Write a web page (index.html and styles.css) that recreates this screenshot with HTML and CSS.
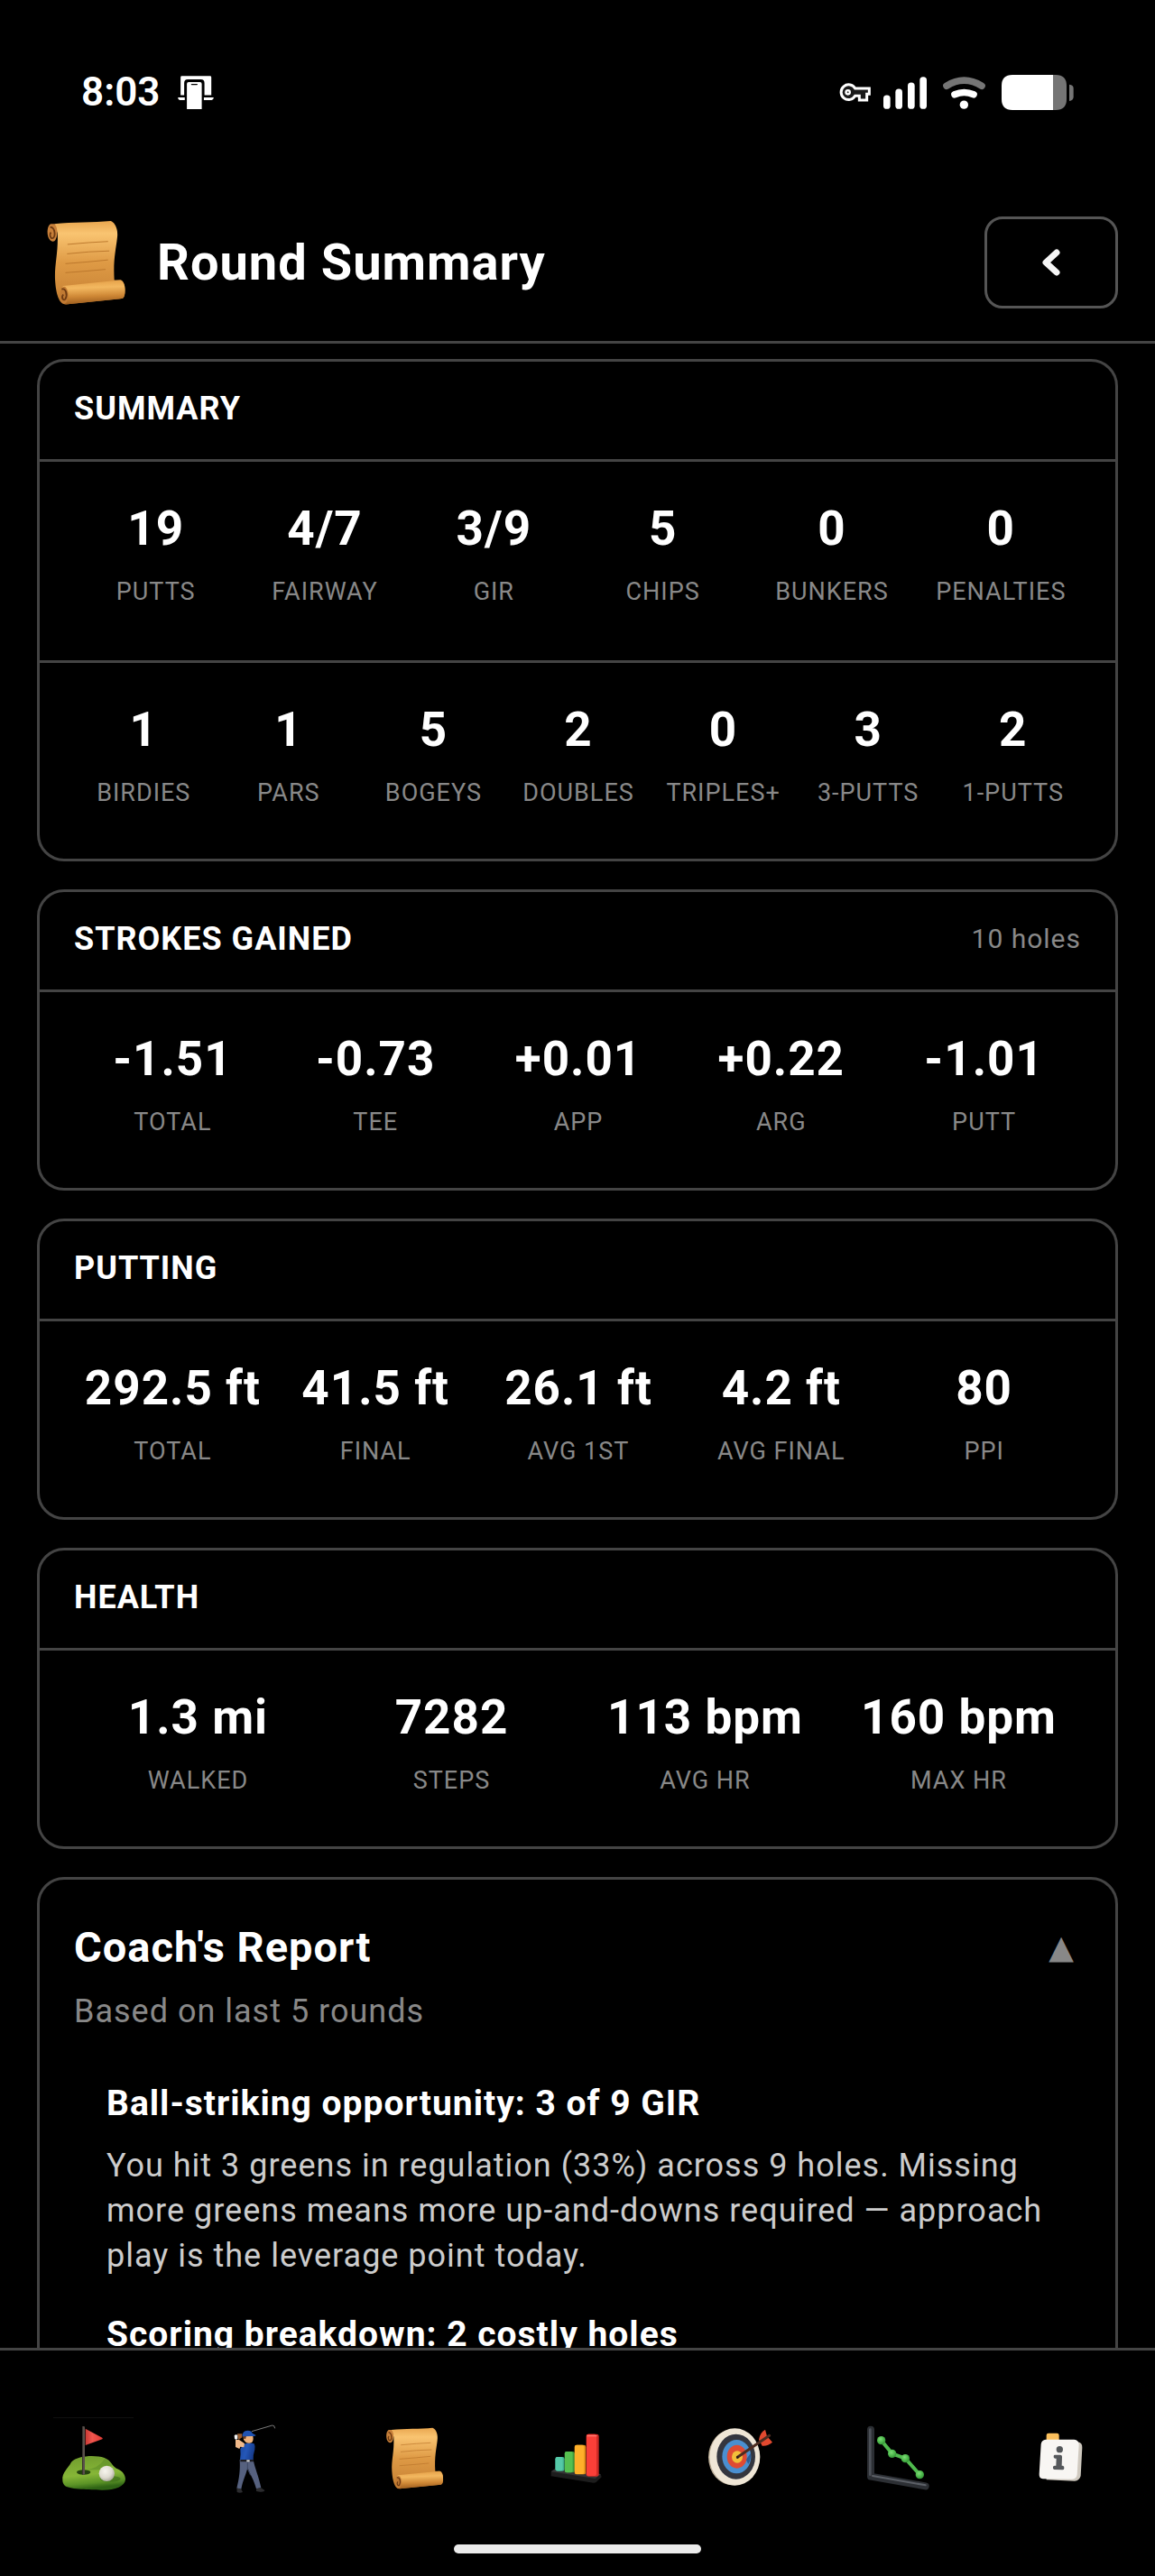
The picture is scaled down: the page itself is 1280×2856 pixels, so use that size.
FILE: index.html
```html
<!DOCTYPE html>
<html lang="en">

<head>
    <meta charset="UTF-8">
    <meta name="viewport" content="width=device-width, initial-scale=1.0">
    <title>Round Summary</title>
    <link rel="stylesheet" href="styles.css">
</head>

<body>
    <!-- Shared gradients and the scroll icon -->
    <svg class="defs" aria-hidden="true">
        <defs>
            <linearGradient id="paper" x1="0" y1="0" x2="0" y2="1">
                <stop offset="0" stop-color="#e9a64f" />
                <stop offset="0.15" stop-color="#f9c471" />
                <stop offset="0.5" stop-color="#de9a45" />
                <stop offset="0.8" stop-color="#cf8a3a" />
                <stop offset="1" stop-color="#b8732a" />
            </linearGradient>
            <linearGradient id="roll" x1="0" y1="0" x2="0.1" y2="1">
                <stop offset="0" stop-color="#e19b43" />
                <stop offset="0.35" stop-color="#f3b860" />
                <stop offset="0.7" stop-color="#cf8836" />
                <stop offset="1" stop-color="#9f5f1f" />
            </linearGradient>
            <linearGradient id="grass" x1="0" y1="0" x2="0.2" y2="1">
                <stop offset="0" stop-color="#6f9a2d" />
                <stop offset="0.6" stop-color="#86b637" />
                <stop offset="0.85" stop-color="#5b9326" />
                <stop offset="1" stop-color="#2f6415" />
            </linearGradient>
            <linearGradient id="flag" x1="0" y1="0" x2="1" y2="0">
                <stop offset="0" stop-color="#c93a35" />
                <stop offset="0.4" stop-color="#f0564e" />
                <stop offset="1" stop-color="#e03a35" />
            </linearGradient>
            <radialGradient id="ball" cx="0.4" cy="0.35" r="0.7">
                <stop offset="0" stop-color="#f7f5ee" />
                <stop offset="0.6" stop-color="#dedbd0" />
                <stop offset="1" stop-color="#a5a396" />
            </radialGradient>
            <linearGradient id="shirt" x1="0" y1="0" x2="1" y2="0.3">
                <stop offset="0" stop-color="#1b479f" />
                <stop offset="0.5" stop-color="#2457b8" />
                <stop offset="1" stop-color="#173c8c" />
            </linearGradient>
            <radialGradient id="dot" cx="0.4" cy="0.35" r="0.7">
                <stop offset="0" stop-color="#7fdb78" />
                <stop offset="0.5" stop-color="#52bd50" />
                <stop offset="1" stop-color="#2f8f33" />
            </radialGradient>
            <symbol id="scroll" viewBox="-39 121 270 270">
                <path d="M14 163 C60 158 110 160 151 156 C163 160 170 178 167 198 C164 226 157 250 160 300 L176 300 C186 304 188 320 184 340 C182 344 176 346 170 346 L42 359 C26 360 18 334 16 300 C14 262 24 236 22 186 Z" fill="url(#paper)" />
                <path d="M6 163 C-6 166 -6 204 10 206 C22 207 26 172 14 163 Z" fill="#c8803a" />
                <path d="M4 172 C14 168 18 190 12 197 C6 202 1 190 6 184" fill="none" stroke="#6d3a12" stroke-width="4" />
                <path d="M36 314 L174 300 C188 302 190 340 180 345 L42 359 C30 352 28 320 36 314 Z" fill="url(#roll)" />
                <ellipse cx="38" cy="337" rx="10" ry="21" fill="#c17a33" />
                <path d="M32 322 C42 318 47 336 41 346 C36 352 30 342 36 335" fill="none" stroke="#6d3a12" stroke-width="4" />
                <path d="M47 213 Q100 208 144 206 M46 236 Q100 230 147 229 M42 260 Q96 256 144 251 M42 282 Q96 278 138 274" fill="none" stroke="#b9742a" stroke-width="2" stroke-linecap="round" />
            </symbol>
        </defs>
    </svg>

    <div class="status-bar">
        <div class="status-left">
            <span class="time">8:03</span>
            <svg class="standby-icon" viewBox="357 50 120 112" aria-hidden="true">
                <path d="M370 51 H465 Q469 51 469 55 V115 H446 V74 Q446 62 434 62 H390 Q378 62 378 74 V115 H366 V55 Q366 51 370 51 Z" fill="#fff" />
                <path d="M357 123 H380 V132 H363 Q357 130 357 123 Z M444 123 H477 Q477 130 470 132 H444 Z" fill="#fff" />
                <path d="M393 71 H431 Q437 71 437 77 V162 H387 V77 Q387 71 393 71 Z" fill="#fff" />
                <rect x="401" y="77" width="22" height="4" rx="2" fill="#000" />
            </svg>
        </div>
        <div class="status-right">
            <svg class="key-icon" viewBox="30 70 105 63" aria-hidden="true">
                <path d="M83 88 H130 V107 H122 V127 H97 V113 H83 A25 25 0 1 1 83 88 Z" fill="#1a1a1a" stroke="#fff" stroke-width="9" />
                <circle cx="59" cy="101" r="10" fill="#fff" />
                <circle cx="59" cy="101" r="3" fill="#333" />
            </svg>
            <svg class="signal-icon" viewBox="177 44 144 107" aria-hidden="true">
                <rect x="177" y="105" width="23" height="46" rx="11" fill="#fff" />
                <rect x="217" y="84" width="23" height="67" rx="11" fill="#fff" />
                <rect x="258" y="63" width="23" height="88" rx="11" fill="#fff" />
                <rect x="298" y="44" width="23" height="107" rx="11" fill="#fff" />
            </svg>
            <svg class="wifi-icon" viewBox="363 44 153 107" aria-hidden="true">
                <path d="M387 74 Q445 38 504 74" fill="none" stroke="#757575" stroke-width="23" stroke-linecap="round" />
                <path d="M414 103 Q445 89 477 103" fill="none" stroke="#fff" stroke-width="23" stroke-linecap="round" />
                <circle cx="445" cy="137" r="14" fill="#fff" />
            </svg>
            <svg class="battery-icon" viewBox="558 39 252 117" aria-hidden="true">
                <path d="M741 39 H750 Q786 39 786 75 V120 Q786 156 750 156 H741 Z" fill="#757575" />
                <path d="M741 39 H606 Q570 39 570 75 V120 Q570 156 606 156 H741 Z" fill="#fff" />
                <path d="M795 71 Q809 72 809 84 V112 Q809 124 795 126 Z" fill="#757575" />
            </svg>
        </div>
    </div>

    <header class="page-header">
        <svg class="header-icon" aria-hidden="true"><use href="#scroll" /></svg>
        <h1>Round Summary</h1>
        <button class="back-button" type="button" aria-label="Back">
            <svg viewBox="0 0 22 30" aria-hidden="true">
                <path d="M17 4 L5 15 L17 26" fill="none" stroke="#f5f5f5" stroke-width="7" stroke-linecap="round" stroke-linejoin="round" />
            </svg>
        </button>
    </header>

    <main class="content">
        <section class="card">
            <div class="card-header">
                <h2>SUMMARY</h2>
            </div>
            <div class="stat-row cols-6">
                <div class="stat"><div class="value">19</div><div class="label">PUTTS</div></div>
                <div class="stat"><div class="value">4/7</div><div class="label">FAIRWAY</div></div>
                <div class="stat"><div class="value">3/9</div><div class="label">GIR</div></div>
                <div class="stat"><div class="value">5</div><div class="label">CHIPS</div></div>
                <div class="stat"><div class="value">0</div><div class="label">BUNKERS</div></div>
                <div class="stat"><div class="value">0</div><div class="label">PENALTIES</div></div>
            </div>
            <div class="stat-row cols-7">
                <div class="stat"><div class="value">1</div><div class="label">BIRDIES</div></div>
                <div class="stat"><div class="value">1</div><div class="label">PARS</div></div>
                <div class="stat"><div class="value">5</div><div class="label">BOGEYS</div></div>
                <div class="stat"><div class="value">2</div><div class="label">DOUBLES</div></div>
                <div class="stat"><div class="value">0</div><div class="label">TRIPLES+</div></div>
                <div class="stat"><div class="value">3</div><div class="label">3-PUTTS</div></div>
                <div class="stat"><div class="value">2</div><div class="label">1-PUTTS</div></div>
            </div>
        </section>

        <section class="card">
            <div class="card-header">
                <h2>STROKES GAINED</h2>
                <span class="note">10 holes</span>
            </div>
            <div class="stat-row cols-5">
                <div class="stat"><div class="value">-1.51</div><div class="label">TOTAL</div></div>
                <div class="stat"><div class="value">-0.73</div><div class="label">TEE</div></div>
                <div class="stat"><div class="value">+0.01</div><div class="label">APP</div></div>
                <div class="stat"><div class="value">+0.22</div><div class="label">ARG</div></div>
                <div class="stat"><div class="value">-1.01</div><div class="label">PUTT</div></div>
            </div>
        </section>

        <section class="card">
            <div class="card-header">
                <h2>PUTTING</h2>
            </div>
            <div class="stat-row cols-5">
                <div class="stat"><div class="value">292.5 ft</div><div class="label">TOTAL</div></div>
                <div class="stat"><div class="value">41.5 ft</div><div class="label">FINAL</div></div>
                <div class="stat"><div class="value">26.1 ft</div><div class="label">AVG 1ST</div></div>
                <div class="stat"><div class="value">4.2 ft</div><div class="label">AVG FINAL</div></div>
                <div class="stat"><div class="value">80</div><div class="label">PPI</div></div>
            </div>
        </section>

        <section class="card">
            <div class="card-header">
                <h2>HEALTH</h2>
            </div>
            <div class="stat-row cols-4">
                <div class="stat"><div class="value">1.3 mi</div><div class="label">WALKED</div></div>
                <div class="stat"><div class="value">7282</div><div class="label">STEPS</div></div>
                <div class="stat"><div class="value">113 bpm</div><div class="label">AVG HR</div></div>
                <div class="stat"><div class="value">160 bpm</div><div class="label">MAX HR</div></div>
            </div>
        </section>

        <section class="card report">
            <div class="report-header">
                <h2>Coach's Report</h2>
                <button class="toggle" type="button" aria-label="Collapse report">▲</button>
            </div>
            <p class="report-note">Based on last 5 rounds</p>
            <div class="report-body">
                <article>
                    <h3>Ball-striking opportunity: 3 of 9 GIR</h3>
                    <p>You hit 3 greens in regulation (33%) across 9 holes. Missing more greens means more up-and-downs required — approach play is the leverage point today.</p>
                </article>
                <article>
                    <h3>Scoring breakdown: 2 costly holes</h3>
                </article>
            </div>
        </section>
    </main>

    <nav class="tab-bar">
        <div class="tabs">
            <a href="#course" aria-label="Course">
                <svg viewBox="180 121 270 270" aria-hidden="true">
                    <path d="M180 122 H447" stroke="#1c1c1c" stroke-width="2" />
                    <path d="M211 330 C208 305 230 290 240 270 C262 248 320 246 350 256 C372 264 376 284 390 291 C410 298 420 312 420 328 C418 352 384 364 340 363 C300 362 240 362 220 350 C214 344 211 338 211 330 Z" fill="url(#grass)" />
                    <path d="M286 296 Q330 292 352 258 Q370 268 376 282 Q350 282 336 296 Z" fill="#5f8f28" opacity="0.6" />
                    <ellipse cx="370" cy="326" rx="34" ry="10" fill="#3e6f1b" opacity="0.7" />
                    <ellipse cx="281" cy="304" rx="23" ry="8" fill="#24420f" />
                    <rect x="276" y="151" width="9" height="161" rx="4" fill="#5a504a" />
                    <rect x="276" y="151" width="3" height="161" rx="1" fill="#3a3330" />
                    <path d="M287 159 L343 189 Q346 192 343 194 L287 214 Z" fill="url(#flag)" />
                    <circle cx="358" cy="308" r="26" fill="url(#ball)" />
                </svg>
            </a>
            <a href="#play" aria-label="Play">
                <svg viewBox="715 121 270 270" aria-hidden="true">
                    <path d="M838 168 L906 148 Q914 147 915 158" fill="none" stroke="#7c7c7c" stroke-width="3" />
                    <path d="M798 262 L843 262 C848 290 862 320 869 356 L853 359 C846 330 832 310 824 288 C820 310 808 330 803 360 L788 357 C796 325 800 300 798 262 Z" fill="#56617f" />
                    <path d="M824 270 L824 292 L834 314" fill="none" stroke="#3e4763" stroke-width="3" />
                    <path d="M788 356 L803 360 L808 370 Q798 374 789 370 Z M853 358 L869 356 L881 364 Q880 370 866 369 L853 367 Z" fill="#2b2b2e" />
                    <path d="M812 210 Q830 204 846 209 Q850 216 848 228 Q842 246 843 263 L799 263 Q802 246 800 226 Z" fill="url(#shirt)" />
                    <rect x="800" y="262" width="44" height="7" rx="2" fill="#1d1d22" />
                    <rect x="821" y="263" width="10" height="6" fill="#d9d9d9" />
                    <path d="M784 196 L796 196 L814 208 L812 221 L800 219 L797 226 L784 220 Z" fill="#f0b98a" />
                    <path d="M810 184 H842 Q845 198 838 205 Q828 210 818 204 L811 196 Z" fill="#efb27c" />
                    <path d="M808 184 H820 L817 194 L812 192 Z" fill="#6b3a1e" />
                    <path d="M790 176 L806 176 L806 188 L794 196 Z" fill="#9a5c2c" />
                    <path d="M780 182 Q784 177 791 180 L791 193 Q785 198 781 192 Z" fill="#f4f4f4" />
                    <path d="M807 185 Q806 166 824 165 Q838 165 840 174 L852 181 Q850 185 838 184 Z" fill="#1f52b0" />
                </svg>
            </a>
            <a href="#rounds" aria-label="Rounds" aria-current="page">
                <svg aria-hidden="true"><use href="#scroll" /></svg>
            </a>
            <a href="#stats" aria-label="Stats">
                <svg viewBox="496 121 270 270" aria-hidden="true">
                    <path d="M543 302 L556 293 L708 310 L711 320 L692 338 L684 339 L543 317 Z" fill="#1d1d1d" />
                    <path d="M543 302 L556 293 L708 310 L690 325 Z" fill="#353535" />
                    <rect x="557" y="253" width="31" height="47" rx="7" fill="#3fae8f" />
                    <rect x="558" y="253" width="24" height="46" rx="6" fill="#55c9a8" />
                    <rect x="588" y="235" width="34" height="70" rx="7" fill="#3b993b" />
                    <rect x="589" y="235" width="26" height="70" rx="6" fill="#56c050" />
                    <rect x="621" y="213" width="38" height="98" rx="7" fill="#e08e17" />
                    <rect x="622" y="213" width="31" height="97" rx="6" fill="#ffb02a" />
                    <rect x="660" y="177" width="42" height="141" rx="7" fill="#cf2a26" />
                    <rect x="661" y="177" width="33" height="139" rx="6" fill="#fb3f38" />
                    <path d="M664 183 H694" stroke="#ff7a70" stroke-width="4" stroke-linecap="round" />
                </svg>
            </a>
            <a href="#practice" aria-label="Practice">
                <svg viewBox="1032 121 270 270" aria-hidden="true">
                    <ellipse cx="1146" cy="254" rx="81" ry="93" fill="#b8aa94" />
                    <ellipse cx="1153" cy="253" rx="84" ry="95" fill="#efe6d6" />
                    <ellipse cx="1157" cy="252" rx="64" ry="75" fill="#34363f" />
                    <ellipse cx="1159" cy="252" rx="48" ry="56" fill="#4a8fd0" />
                    <path d="M1190 262 L1206 240 Q1208 262 1198 276 Z" fill="#2c5d96" />
                    <ellipse cx="1160" cy="252" rx="33" ry="39" fill="#df4a33" />
                    <ellipse cx="1161" cy="253" rx="18" ry="20" fill="#f2bf3a" />
                    <path d="M1233 196 Q1236 172 1254 162 L1260 184 L1278 204 Q1262 218 1244 216 L1238 204 Z" fill="#e2492f" />
                    <path d="M1162 254 L1268 182" stroke="#4d2c20" stroke-width="9" stroke-linecap="round" />
                    <circle cx="1162" cy="254" r="4" fill="#2e1b14" />
                </svg>
            </a>
            <a href="#trends" aria-label="Trends">
                <svg viewBox="309 121 270 270" aria-hidden="true">
                    <path d="M348 162 V318 L530 350" fill="none" stroke="#2c2f34" stroke-width="24" stroke-linecap="round" stroke-linejoin="round" />
                    <path d="M346 162 V312" stroke="#4d5158" stroke-width="8" stroke-linecap="round" />
                    <path d="M354 316 L530 347" stroke="#5c6067" stroke-width="6" stroke-linecap="round" />
                    <path d="M383 198 L419 242 L463 258 L511 312" fill="none" stroke="#50ba4e" stroke-width="12" stroke-linejoin="round" />
                    <circle cx="383" cy="198" r="14" fill="url(#dot)" />
                    <circle cx="419" cy="242" r="14" fill="url(#dot)" />
                    <circle cx="463" cy="258" r="14" fill="url(#dot)" />
                    <circle cx="511" cy="312" r="14" fill="url(#dot)" />
                </svg>
            </a>
            <a href="#info" aria-label="Info">
                <svg viewBox="844 121 270 270" aria-hidden="true">
                    <rect x="930" y="174" width="42" height="36" rx="7" fill="#fcc05c" />
                    <path d="M926 200 L1034 203 Q1050 206 1049 222 L1044 316 Q1040 332 1024 333 L930 329 Z" fill="#cfc9bf" />
                    <path d="M928 195 H1022 Q1038 197 1038 212 L1032 312 Q1030 326 1016 327 L918 326 Q905 324 906 310 L912 210 Q914 197 928 195 Z" fill="#f8f6f3" />
                    <circle cx="974" cy="228" r="11" fill="#55585b" />
                    <path d="M958 246 H976 Q982 246 982 252 L981 282 H985 Q990 284 989 291 Q988 296 984 296 L956 295 Q950 293 952 286 Q953 282 958 282 H962 L963 258 H958 Q953 256 954 250 Q955 246 958 246 Z" fill="#55585b" />
                </svg>
            </a>
        </div>
        <div class="home-indicator"></div>
    </nav>
</body>

</html>
```
FILE: styles.css
```css
* {
    box-sizing: border-box;
}

body {
    margin: 0;
    height: 100vh;
    display: flex;
    flex-direction: column;
    background-color: #000;
    color: #fff;
    font-family: Roboto, "Liberation Sans", sans-serif;
    letter-spacing: 1px;
}

h1, h2, h3, p {
    margin: 0;
}

svg {
    display: block;
}

.defs {
    position: absolute;
    width: 0;
    height: 0;
}

/* Status bar */
.status-bar {
    display: flex;
    justify-content: space-between;
    align-items: center;
    padding: 83px 90px 107px;
}

.status-left {
    display: flex;
    align-items: center;
    gap: 20px;
}

.time {
    font-size: 44px;
    font-weight: 600;
    line-height: 39px;
    letter-spacing: 0;
}

.standby-icon {
    width: 40px;
    height: 37px;
}

.status-right {
    display: flex;
    align-items: center;
    gap: 14px;
}

.key-icon {
    width: 35px;
    height: 21px;
}

.signal-icon {
    width: 48px;
    height: 36px;
}

.wifi-icon {
    width: 51px;
    height: 36px;
}

.battery-icon {
    width: 84px;
    height: 39px;
}

/* Header */
.page-header {
    display: flex;
    align-items: center;
    gap: 15px;
    padding: 0 41px 26px 36px;
    border-bottom: 3px solid #444;
}

.header-icon {
    width: 123px;
    height: 123px;
}

h1 {
    flex: 1;
    font-size: 56px;
    font-weight: 700;
    line-height: 66px;
}

.back-button {
    display: flex;
    align-items: center;
    justify-content: center;
    width: 148px;
    height: 102px;
    padding: 0;
    background: none;
    border: 3px solid #555;
    border-radius: 20px;
    cursor: pointer;
}

.back-button svg {
    width: 22px;
    height: 30px;
}

/* Cards */
.content {
    flex: 1;
    min-height: 0;
    overflow-y: auto;
    scrollbar-width: none;
    padding: 17px 41px 0;
}

.card {
    margin-bottom: 31px;
    border: 3px solid #444;
    border-radius: 30px;
}

.card-header {
    display: flex;
    justify-content: space-between;
    align-items: center;
    padding: 31px 38px 35px;
    border-bottom: 3px solid #444;
}

.card-header h2 {
    font-size: 36px;
    font-weight: 700;
    line-height: 42px;
}

.note {
    font-size: 30px;
    line-height: 36px;
    color: #888;
}

.stat-row {
    display: grid;
    padding: 42px 33px 57px 35px;
    text-align: center;
}

.stat-row:not(:last-child) {
    padding-bottom: 60px;
    border-bottom: 3px solid #444;
}

.cols-4 { grid-template-columns: repeat(4, minmax(0, 1fr)); }
.cols-5 { grid-template-columns: repeat(5, minmax(0, 1fr)); }
.cols-6 { grid-template-columns: repeat(6, minmax(0, 1fr)); }
.cols-7 { grid-template-columns: repeat(7, minmax(0, 1fr)); }

.value {
    margin-bottom: 22px;
    font-size: 53px;
    font-weight: 700;
    line-height: 64px;
    white-space: nowrap;
}

.label {
    font-size: 27px;
    line-height: 32px;
    color: #888;
    white-space: nowrap;
}

/* Coach's report */
.report {
    padding: 47px 38px 60px;
}

.report-header {
    display: flex;
    justify-content: space-between;
    align-items: center;
}

.report-header h2 {
    font-size: 47px;
    font-weight: 700;
    line-height: 56px;
}

.toggle {
    padding: 0 8px;
    background: none;
    border: none;
    color: #888;
    font-family: "DejaVu Sans", sans-serif;
    font-size: 36px;
    line-height: 42px;
    cursor: pointer;
}

.report-note {
    margin-top: 22px;
    font-size: 36px;
    line-height: 42px;
    color: #888;
}

.report-body {
    display: flex;
    flex-direction: column;
    gap: 39px;
    padding: 58px 36px 0;
}

.report-body h3 {
    font-size: 39px;
    font-weight: 700;
    line-height: 46px;
}

.report-body p {
    margin-top: 21px;
    font-size: 36px;
    line-height: 50px;
    color: #ccc;
}

/* Bottom tabs */
.tab-bar {
    padding: 74px 15px 25px;
    background-color: #000;
    border-top: 3px solid #444;
}

.tabs {
    display: grid;
    grid-template-columns: repeat(7, minmax(0, 1fr));
    justify-items: center;
}

.tabs svg {
    width: 90px;
    height: 90px;
}

.home-indicator {
    width: 274px;
    height: 10px;
    margin: 51px auto 0;
    background-color: #ebebeb;
    border-radius: 5px;
}
```
